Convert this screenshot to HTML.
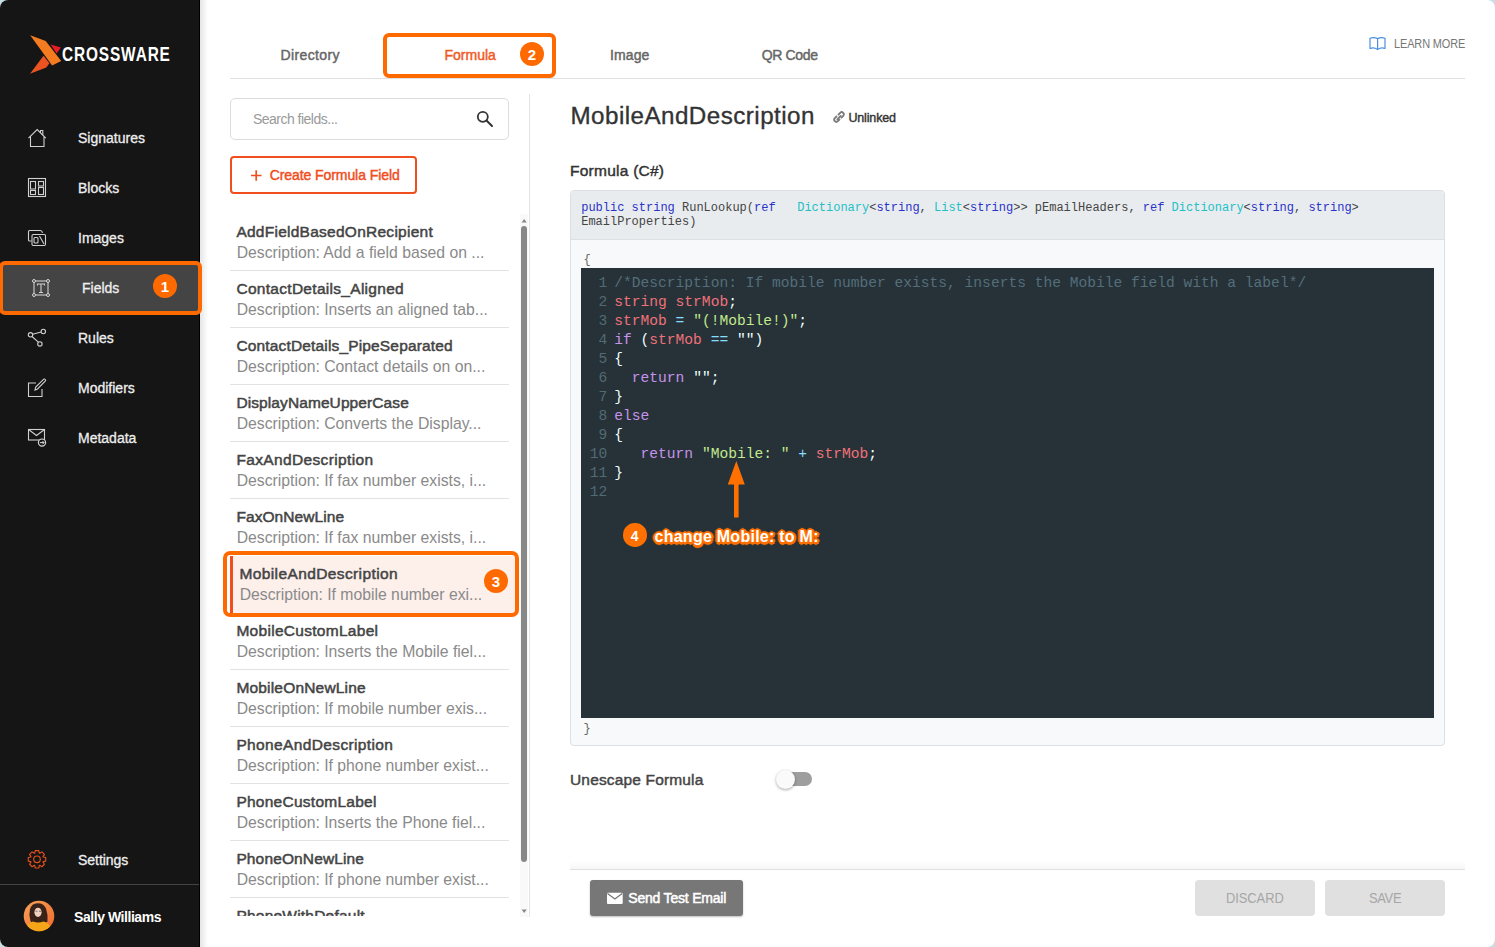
<!DOCTYPE html>
<html><head><meta charset="utf-8">
<style>
*{box-sizing:border-box;margin:0;padding:0}
html,body{width:1495px;height:947px;overflow:hidden;background:#c6e0e4;font-family:"Liberation Sans",sans-serif}
#win{position:absolute;left:0;top:0;width:1495px;height:947px;background:#fff;border-radius:8px;overflow:hidden}
.a{position:absolute}
.t{position:absolute;white-space:pre}
svg{position:absolute;overflow:visible}
</style></head><body><div id="win">
<div class="a" style="left:0;top:0;width:200px;height:947px;background:#151515"></div>
<div class="a" style="left:199px;top:0;width:1px;height:947px;background:#000"></div>
<div class="a" style="left:200px;top:0;width:8px;height:947px;background:linear-gradient(90deg,rgba(0,0,0,0.10),rgba(0,0,0,0))"></div>
<svg style="left:0;top:0" width="200" height="90">
<polygon points="30.2,35.2 45.7,41.1 61.2,60.9 52.1,65.5" fill="#f47b20"/>
<polygon points="50.6,44.6 60.9,47.4 56.6,53.4" fill="#e81c24"/>
<polygon points="30,73.8 43.5,55.8 49.4,63.2 46.3,67.6" fill="#ec5323"/>
</svg>
<div class="t" style="left:61.50px;top:44.22px;font-size:20.3px;line-height:20.3px;color:#fff;font-weight:bold;letter-spacing:1.126px;font-family:'Liberation Sans',sans-serif;transform:scaleX(0.76);transform-origin:0 0;">CROSSWARE</div>
<div class="a" style="left:-1px;top:260.5px;width:202.5px;height:54px;background:#444;border:4px solid #ff6a00;border-radius:6px"></div>
<div class="t" style="left:78.00px;top:131.15px;font-size:14px;line-height:14px;color:#eeeeee;font-weight:normal;letter-spacing:0.000px;font-family:'Liberation Sans',sans-serif;-webkit-text-stroke:0.3px #eeeeee;">Signatures</div>
<div class="t" style="left:78.00px;top:181.15px;font-size:14px;line-height:14px;color:#eeeeee;font-weight:normal;letter-spacing:0.000px;font-family:'Liberation Sans',sans-serif;-webkit-text-stroke:0.3px #eeeeee;">Blocks</div>
<div class="t" style="left:78.00px;top:231.15px;font-size:14px;line-height:14px;color:#eeeeee;font-weight:normal;letter-spacing:0.000px;font-family:'Liberation Sans',sans-serif;-webkit-text-stroke:0.3px #eeeeee;">Images</div>
<div class="t" style="left:82.00px;top:281.15px;font-size:14px;line-height:14px;color:#eeeeee;font-weight:normal;letter-spacing:0.000px;font-family:'Liberation Sans',sans-serif;-webkit-text-stroke:0.3px #eeeeee;">Fields</div>
<div class="t" style="left:78.00px;top:331.15px;font-size:14px;line-height:14px;color:#eeeeee;font-weight:normal;letter-spacing:0.000px;font-family:'Liberation Sans',sans-serif;-webkit-text-stroke:0.3px #eeeeee;">Rules</div>
<div class="t" style="left:78.00px;top:381.15px;font-size:14px;line-height:14px;color:#eeeeee;font-weight:normal;letter-spacing:0.000px;font-family:'Liberation Sans',sans-serif;-webkit-text-stroke:0.3px #eeeeee;">Modifiers</div>
<div class="t" style="left:78.00px;top:431.15px;font-size:14px;line-height:14px;color:#eeeeee;font-weight:normal;letter-spacing:0.000px;font-family:'Liberation Sans',sans-serif;-webkit-text-stroke:0.3px #eeeeee;">Metadata</div>
<svg style="left:0;top:0" width="60" height="460"><g fill="none" stroke="#d0d0d0" stroke-width="1.1"><path d="M28.5,138.2 L37.2,129.5 L45.8,138.2 M30.5,136.3 V146.5 H44 V136.3"/><path d="M40.5,132.8 V130.5 H42.8 V135"/><rect x="28.5" y="178.5" width="17" height="18"/><rect x="30.5" y="181.5" width="5" height="7.5"/><rect x="38.5" y="181.5" width="5" height="4.5"/><rect x="30.5" y="190.5" width="5" height="4"/><rect x="38.5" y="187.5" width="5" height="7"/><path d="M42.5,232.8 Q42,230.5 40.5,230.5 H29.5 Q28.5,230.5 28.5,231.5 V240 Q28.5,241 29.5,241 H31.5"/><rect x="32" y="234.5" width="13.5" height="11" rx="1.2"/><rect x="34" y="237.5" width="4" height="5.5" rx="1"/><path d="M39.5,236 L44,244"/><rect x="34" y="281" width="14" height="14"/><path d="M37.5,285.5 V284 H44.5 V285.5 M41,284 V292.5 M39,292.5 H43"/></g><g fill="#444" stroke="#d8d8d8" stroke-width="1"><circle cx="34" cy="281" r="1.5"/><circle cx="48" cy="281" r="1.5"/><circle cx="34" cy="295" r="1.5"/><circle cx="48" cy="295" r="1.5"/></g><g fill="none" stroke="#d0d0d0" stroke-width="1.1"><circle cx="30.5" cy="334.8" r="2.2"/><circle cx="43.3" cy="331.5" r="2.2"/><circle cx="39.9" cy="343.9" r="2.2"/><path d="M32.6,334.3 L41.2,332 M32,336.5 L38.4,342.2"/><path d="M36,383 H28.5 V396.5 H42 V389"/><path d="M35,390 L35.7,387 L43.5,379.3 Q44.5,378.6 45.3,379.5 Q46,380.4 45.2,381.2 L37.5,389 Z"/><rect x="28.5" y="429.5" width="16" height="10.5"/><path d="M28.5,429.5 L36.5,435.5 L44.5,429.5"/></g><circle cx="42" cy="442.6" r="3.6" fill="#151515" stroke="#d8d8d8" stroke-width="1.2"/><path d="M40,442.6 H44 M42.5,441 L44,442.6 L42.5,444.2" fill="none" stroke="#d8d8d8" stroke-width="1"/></svg>
<div class="a" style="left:153px;top:274px;width:24px;height:24px;border-radius:50%;background:#ff6a00"></div>
<div class="t" style="left:160.80px;top:278.50px;font-size:15px;line-height:15px;color:#fff;font-weight:bold;letter-spacing:0.000px;font-family:'Liberation Sans',sans-serif;">1</div>
<svg style="left:0;top:0" width="60" height="947"><g fill="none" stroke="#e3501c" stroke-width="1.15"><path d="M43.18,856.97 L45.72,857.53 L45.72,861.07 L43.18,861.63 L43.01,862.02 L44.42,864.22 L41.92,866.72 L39.72,865.31 L39.33,865.48 L38.77,868.02 L35.23,868.02 L34.67,865.48 L34.28,865.31 L32.08,866.72 L29.58,864.22 L30.99,862.02 L30.82,861.63 L28.28,861.07 L28.28,857.53 L30.82,856.97 L30.99,856.58 L29.58,854.38 L32.08,851.88 L34.28,853.29 L34.67,853.12 L35.23,850.58 L38.77,850.58 L39.33,853.12 L39.72,853.29 L41.92,851.88 L44.42,854.38 L43.01,856.58 Z" stroke-linejoin="round"/><circle cx="37" cy="859.3" r="3.3"/></g></svg>
<div class="t" style="left:78.00px;top:853.15px;font-size:14px;line-height:14px;color:#eeeeee;font-weight:normal;letter-spacing:-0.041px;font-family:'Liberation Sans',sans-serif;-webkit-text-stroke:0.3px #eeeeee;">Settings</div>
<div class="a" style="left:0;top:884px;width:199px;height:1px;background:#444"></div>
<svg style="left:0;top:0" width="80" height="947">
<defs><linearGradient id="av" x1="0" y1="0" x2="1" y2="1"><stop offset="0" stop-color="#f7a25a"/><stop offset="1" stop-color="#f0692a"/></linearGradient>
<clipPath id="avc"><circle cx="39" cy="916" r="15.3"/></clipPath></defs>
<circle cx="39" cy="916" r="15.3" fill="url(#av)"/>
<g clip-path="url(#avc)">
<path d="M30.5,921 Q28.5,915 30,909 Q31.5,903.5 37.5,903.2 Q43.5,903 46,908.5 Q48,914 47.5,921.5 Q44,925 38,924 Q33,925 30.5,921 Z" fill="#3b2218"/>
<ellipse cx="38" cy="912.3" rx="3.6" ry="4.6" fill="#f0d2c0"/>
<path d="M35.5,911.2 h2 M39,911.2 h2" stroke="#555" stroke-width="0.8"/>
<path d="M25,934 Q26.5,922.5 33,921.5 Q38,923.5 43.5,921.5 Q50.5,922.5 53,934 Z" fill="#f6a418"/>
</g></svg>
<div class="t" style="left:74.00px;top:910.15px;font-size:14px;line-height:14px;color:#ffffff;font-weight:bold;letter-spacing:-0.442px;font-family:'Liberation Sans',sans-serif;">Sally Williams</div>
<div class="t" style="left:280.50px;top:48.15px;font-size:14px;line-height:14px;color:#666;font-weight:normal;letter-spacing:0.374px;font-family:'Liberation Sans',sans-serif;-webkit-text-stroke:0.45px #666;">Directory</div>
<div class="t" style="left:444.50px;top:48.15px;font-size:14px;line-height:14px;color:#f05a22;font-weight:normal;letter-spacing:-0.007px;font-family:'Liberation Sans',sans-serif;-webkit-text-stroke:0.45px #f05a22;">Formula</div>
<div class="t" style="left:610.00px;top:48.15px;font-size:14px;line-height:14px;color:#666;font-weight:normal;letter-spacing:0.123px;font-family:'Liberation Sans',sans-serif;-webkit-text-stroke:0.45px #666;">Image</div>
<div class="t" style="left:761.80px;top:48.15px;font-size:14px;line-height:14px;color:#666;font-weight:normal;letter-spacing:-0.359px;font-family:'Liberation Sans',sans-serif;-webkit-text-stroke:0.45px #666;">QR Code</div>
<div class="a" style="left:230px;top:78px;width:1235px;height:1px;background:#e0e0e0"></div>
<div class="a" style="left:383px;top:33px;width:173px;height:45px;border:4px solid #ff6a00;border-radius:6px"></div>
<div class="a" style="left:520px;top:42px;width:24px;height:24px;border-radius:50%;background:#ff6a00"></div>
<div class="t" style="left:527.80px;top:46.60px;font-size:15px;line-height:15px;color:#fff;font-weight:bold;letter-spacing:0.000px;font-family:'Liberation Sans',sans-serif;">2</div>
<svg style="left:0;top:0" width="1495" height="60"><path d="M1370,38.3 Q1374,37 1377.6,38.6 Q1381.2,37 1385,38.3 V48.5 Q1381.2,47 1377.6,49.5 Q1374,47 1370,48.5 Z M1377.6,38.6 V49.5" fill="none" stroke="#4a8fe0" stroke-width="1.2" stroke-linejoin="round"/></svg>
<div class="t" style="left:1393.60px;top:37.13px;font-size:13.2px;line-height:13.2px;color:#777;font-weight:normal;letter-spacing:-0.140px;font-family:'Liberation Sans',sans-serif;transform:scaleX(0.83);transform-origin:0 0;">LEARN MORE</div>
<div class="a" style="left:230px;top:98px;width:279px;height:42px;border:1px solid #dcdcdc;border-radius:5px"></div>
<div class="t" style="left:252.90px;top:112.05px;font-size:14px;line-height:14px;color:#9a9a9a;font-weight:normal;letter-spacing:-0.506px;font-family:'Liberation Sans',sans-serif;">Search fields...</div>
<svg style="left:0;top:0" width="600" height="200"><circle cx="482.8" cy="116.8" r="5" fill="none" stroke="#333" stroke-width="1.8"/><path d="M486.5,120.5 L492,126" stroke="#333" stroke-width="2" stroke-linecap="round"/></svg>
<div class="a" style="left:230px;top:156px;width:187px;height:38px;border:2px solid #f04e1e;border-radius:4px"></div>
<svg style="left:0;top:0" width="600" height="200"><path d="M251,175.5 H261.5 M256.2,170.3 V180.7" stroke="#f04e1e" stroke-width="1.7"/></svg>
<div class="t" style="left:269.70px;top:168.15px;font-size:14px;line-height:14px;color:#f04e1e;font-weight:normal;letter-spacing:-0.078px;font-family:'Liberation Sans',sans-serif;-webkit-text-stroke:0.45px #f04e1e;">Create Formula Field</div>
<div class="a" style="left:529px;top:94px;width:1px;height:823px;background:#e3e3e3"></div>
<div class="a" style="left:0;top:214px;width:520px;height:702px;overflow:hidden">
<div class="t" style="left:236.40px;top:9.68px;font-size:15.5px;line-height:15.5px;color:#444;font-weight:normal;letter-spacing:0.257px;font-family:'Liberation Sans',sans-serif;-webkit-text-stroke:0.5px #444;">AddFieldBasedOnRecipient</div>
<div class="t" style="left:236.70px;top:30.67px;font-size:15.75px;line-height:15.75px;color:#8a8a8a;font-weight:normal;letter-spacing:0.000px;font-family:'Liberation Sans',sans-serif;">Description: Add a field based on ...</div>
<div class="a" style="left:230px;top:56.4px;width:279px;height:1px;background:#e2e2e2"></div>
<div class="t" style="left:236.40px;top:66.68px;font-size:15.5px;line-height:15.5px;color:#444;font-weight:normal;letter-spacing:0.296px;font-family:'Liberation Sans',sans-serif;-webkit-text-stroke:0.5px #444;">ContactDetails_Aligned</div>
<div class="t" style="left:236.70px;top:87.67px;font-size:15.75px;line-height:15.75px;color:#8a8a8a;font-weight:normal;letter-spacing:0.000px;font-family:'Liberation Sans',sans-serif;">Description: Inserts an aligned tab...</div>
<div class="a" style="left:230px;top:113.4px;width:279px;height:1px;background:#e2e2e2"></div>
<div class="t" style="left:236.40px;top:123.68px;font-size:15.5px;line-height:15.5px;color:#444;font-weight:normal;letter-spacing:0.159px;font-family:'Liberation Sans',sans-serif;-webkit-text-stroke:0.5px #444;">ContactDetails_PipeSeparated</div>
<div class="t" style="left:236.70px;top:144.67px;font-size:15.75px;line-height:15.75px;color:#8a8a8a;font-weight:normal;letter-spacing:0.000px;font-family:'Liberation Sans',sans-serif;">Description: Contact details on on...</div>
<div class="a" style="left:230px;top:170.4px;width:279px;height:1px;background:#e2e2e2"></div>
<div class="t" style="left:236.40px;top:180.68px;font-size:15.5px;line-height:15.5px;color:#444;font-weight:normal;letter-spacing:0.095px;font-family:'Liberation Sans',sans-serif;-webkit-text-stroke:0.5px #444;">DisplayNameUpperCase</div>
<div class="t" style="left:236.70px;top:201.67px;font-size:15.75px;line-height:15.75px;color:#8a8a8a;font-weight:normal;letter-spacing:0.000px;font-family:'Liberation Sans',sans-serif;">Description: Converts the Display...</div>
<div class="a" style="left:230px;top:227.4px;width:279px;height:1px;background:#e2e2e2"></div>
<div class="t" style="left:236.40px;top:237.68px;font-size:15.5px;line-height:15.5px;color:#444;font-weight:normal;letter-spacing:0.359px;font-family:'Liberation Sans',sans-serif;-webkit-text-stroke:0.5px #444;">FaxAndDescription</div>
<div class="t" style="left:236.70px;top:258.67px;font-size:15.75px;line-height:15.75px;color:#8a8a8a;font-weight:normal;letter-spacing:0.000px;font-family:'Liberation Sans',sans-serif;">Description: If fax number exists, i...</div>
<div class="a" style="left:230px;top:284.4px;width:279px;height:1px;background:#e2e2e2"></div>
<div class="t" style="left:236.40px;top:294.68px;font-size:15.5px;line-height:15.5px;color:#444;font-weight:normal;letter-spacing:0.080px;font-family:'Liberation Sans',sans-serif;-webkit-text-stroke:0.5px #444;">FaxOnNewLine</div>
<div class="t" style="left:236.70px;top:315.67px;font-size:15.75px;line-height:15.75px;color:#8a8a8a;font-weight:normal;letter-spacing:0.000px;font-family:'Liberation Sans',sans-serif;">Description: If fax number exists, i...</div>
<div class="a" style="left:230px;top:342.4px;width:286px;height:57px;background:#fdefea"></div>
<div class="a" style="left:230px;top:342.4px;width:3px;height:57px;background:#f04e1e"></div>
<div class="t" style="left:239.40px;top:351.68px;font-size:15.5px;line-height:15.5px;color:#444;font-weight:normal;letter-spacing:0.392px;font-family:'Liberation Sans',sans-serif;-webkit-text-stroke:0.5px #444;">MobileAndDescription</div>
<div class="t" style="left:239.70px;top:372.67px;font-size:15.75px;line-height:15.75px;color:#8a8a8a;font-weight:normal;letter-spacing:0.000px;font-family:'Liberation Sans',sans-serif;">Description: If mobile number exi...</div>
<div class="t" style="left:236.40px;top:408.68px;font-size:15.5px;line-height:15.5px;color:#444;font-weight:normal;letter-spacing:0.291px;font-family:'Liberation Sans',sans-serif;-webkit-text-stroke:0.5px #444;">MobileCustomLabel</div>
<div class="t" style="left:236.70px;top:429.67px;font-size:15.75px;line-height:15.75px;color:#8a8a8a;font-weight:normal;letter-spacing:0.000px;font-family:'Liberation Sans',sans-serif;">Description: Inserts the Mobile fiel...</div>
<div class="a" style="left:230px;top:455.4px;width:279px;height:1px;background:#e2e2e2"></div>
<div class="t" style="left:236.40px;top:465.68px;font-size:15.5px;line-height:15.5px;color:#444;font-weight:normal;letter-spacing:0.184px;font-family:'Liberation Sans',sans-serif;-webkit-text-stroke:0.5px #444;">MobileOnNewLine</div>
<div class="t" style="left:236.70px;top:486.67px;font-size:15.75px;line-height:15.75px;color:#8a8a8a;font-weight:normal;letter-spacing:0.000px;font-family:'Liberation Sans',sans-serif;">Description: If mobile number exis...</div>
<div class="a" style="left:230px;top:512.4px;width:279px;height:1px;background:#e2e2e2"></div>
<div class="t" style="left:236.40px;top:522.68px;font-size:15.5px;line-height:15.5px;color:#444;font-weight:normal;letter-spacing:0.368px;font-family:'Liberation Sans',sans-serif;-webkit-text-stroke:0.5px #444;">PhoneAndDescription</div>
<div class="t" style="left:236.70px;top:543.67px;font-size:15.75px;line-height:15.75px;color:#8a8a8a;font-weight:normal;letter-spacing:0.000px;font-family:'Liberation Sans',sans-serif;">Description: If phone number exist...</div>
<div class="a" style="left:230px;top:569.4px;width:279px;height:1px;background:#e2e2e2"></div>
<div class="t" style="left:236.40px;top:579.68px;font-size:15.5px;line-height:15.5px;color:#444;font-weight:normal;letter-spacing:0.257px;font-family:'Liberation Sans',sans-serif;-webkit-text-stroke:0.5px #444;">PhoneCustomLabel</div>
<div class="t" style="left:236.70px;top:600.67px;font-size:15.75px;line-height:15.75px;color:#8a8a8a;font-weight:normal;letter-spacing:0.000px;font-family:'Liberation Sans',sans-serif;">Description: Inserts the Phone fiel...</div>
<div class="a" style="left:230px;top:626.4px;width:279px;height:1px;background:#e2e2e2"></div>
<div class="t" style="left:236.40px;top:636.68px;font-size:15.5px;line-height:15.5px;color:#444;font-weight:normal;letter-spacing:0.136px;font-family:'Liberation Sans',sans-serif;-webkit-text-stroke:0.5px #444;">PhoneOnNewLine</div>
<div class="t" style="left:236.70px;top:657.67px;font-size:15.75px;line-height:15.75px;color:#8a8a8a;font-weight:normal;letter-spacing:0.000px;font-family:'Liberation Sans',sans-serif;">Description: If phone number exist...</div>
<div class="a" style="left:230px;top:683.4px;width:279px;height:1px;background:#e2e2e2"></div>
<div class="t" style="left:236.40px;top:693.68px;font-size:15.5px;line-height:15.5px;color:#444;font-weight:normal;letter-spacing:0.221px;font-family:'Liberation Sans',sans-serif;-webkit-text-stroke:0.5px #444;">PhoneWithDefault</div>
<div class="t" style="left:236.70px;top:714.67px;font-size:15.75px;line-height:15.75px;color:#8a8a8a;font-weight:normal;letter-spacing:0.000px;font-family:'Liberation Sans',sans-serif;">Description: ...</div>
<div class="a" style="left:230px;top:740.4px;width:279px;height:1px;background:#e2e2e2"></div>
</div>
<div class="a" style="left:519.5px;top:214px;width:8.5px;height:702.5px;background:#f9f9f9"></div>
<div class="a" style="left:521.3px;top:226px;width:5.7px;height:635.5px;background:#888;border-radius:3px"></div>
<svg style="left:0;top:0" width="600" height="947"><path d="M521.6,222.5 L524.2,219 L526.8,222.5 Z M521.6,909.5 L524.2,913 L526.8,909.5 Z" fill="#888"/></svg>
<div class="a" style="left:223px;top:551px;width:296px;height:65.5px;border:4px solid #ff6a00;border-radius:7px"></div>
<div class="a" style="left:484px;top:569px;width:24px;height:24px;border-radius:50%;background:#ff6a00"></div>
<div class="t" style="left:491.80px;top:573.60px;font-size:15px;line-height:15px;color:#fff;font-weight:bold;letter-spacing:0.000px;font-family:'Liberation Sans',sans-serif;">3</div>
<div class="t" style="left:570.50px;top:104.31px;font-size:24.2px;line-height:24.2px;color:#333;font-weight:normal;letter-spacing:0.454px;font-family:'Liberation Sans',sans-serif;-webkit-text-stroke:0.35px #333;">MobileAndDescription</div>
<svg style="left:0;top:0" width="1495" height="200"><g fill="none" stroke="#7a7a7a" stroke-width="1.8" stroke-linecap="round"><path d="M836.5,116.5 L834.8,118.2 Q833.3,119.7 834.8,121.2 Q836.3,122.7 837.8,121.2 L839.5,119.5"/><path d="M838.5,114.5 L840.2,112.8 Q841.7,111.3 843.2,112.8 Q844.7,114.3 843.2,115.8 L841.5,117.5"/><path d="M837.3,119.3 L840.7,115.9"/></g></svg>
<div class="t" style="left:848.40px;top:111.82px;font-size:12.5px;line-height:12.5px;color:#333;font-weight:normal;letter-spacing:-0.148px;font-family:'Liberation Sans',sans-serif;-webkit-text-stroke:0.4px #333;">Unlinked</div>
<div class="t" style="left:570.00px;top:162.88px;font-size:15.5px;line-height:15.5px;color:#333;font-weight:normal;letter-spacing:0.247px;font-family:'Liberation Sans',sans-serif;-webkit-text-stroke:0.45px #333;">Formula (C#)</div>
<div class="a" style="left:570px;top:190px;width:875px;height:556px;border:1px solid #dcdfe3;border-radius:4px;background:#f8f9fa;overflow:hidden"><div class="a" style="left:0;top:0;width:873px;height:49px;background:#e9ecef;border-bottom:1px solid #dcdfe3"></div></div>
<div class="t" style="left:581.20px;top:201.50px;font-size:12px;line-height:12px;color:#2a33c8;font-weight:normal;letter-spacing:0.000px;font-family:'Liberation Mono',monospace;">public</div>
<div class="t" style="left:624.40px;top:201.50px;font-size:12px;line-height:12px;color:#444;font-weight:normal;letter-spacing:0.000px;font-family:'Liberation Mono',monospace;"> </div>
<div class="t" style="left:631.60px;top:201.50px;font-size:12px;line-height:12px;color:#2a33c8;font-weight:normal;letter-spacing:0.000px;font-family:'Liberation Mono',monospace;">string</div>
<div class="t" style="left:674.80px;top:201.50px;font-size:12px;line-height:12px;color:#444;font-weight:normal;letter-spacing:0.000px;font-family:'Liberation Mono',monospace;"> RunLookup(</div>
<div class="t" style="left:754.00px;top:201.50px;font-size:12px;line-height:12px;color:#2a33c8;font-weight:normal;letter-spacing:0.000px;font-family:'Liberation Mono',monospace;">ref</div>
<div class="t" style="left:775.60px;top:201.50px;font-size:12px;line-height:12px;color:#444;font-weight:normal;letter-spacing:0.000px;font-family:'Liberation Mono',monospace;">   </div>
<div class="t" style="left:797.20px;top:201.50px;font-size:12px;line-height:12px;color:#22c0c6;font-weight:normal;letter-spacing:0.000px;font-family:'Liberation Mono',monospace;">Dictionary</div>
<div class="t" style="left:869.20px;top:201.50px;font-size:12px;line-height:12px;color:#444;font-weight:normal;letter-spacing:0.000px;font-family:'Liberation Mono',monospace;">&lt;</div>
<div class="t" style="left:876.40px;top:201.50px;font-size:12px;line-height:12px;color:#2a33c8;font-weight:normal;letter-spacing:0.000px;font-family:'Liberation Mono',monospace;">string</div>
<div class="t" style="left:919.60px;top:201.50px;font-size:12px;line-height:12px;color:#444;font-weight:normal;letter-spacing:0.000px;font-family:'Liberation Mono',monospace;">, </div>
<div class="t" style="left:934.00px;top:201.50px;font-size:12px;line-height:12px;color:#22c0c6;font-weight:normal;letter-spacing:0.000px;font-family:'Liberation Mono',monospace;">List</div>
<div class="t" style="left:962.80px;top:201.50px;font-size:12px;line-height:12px;color:#444;font-weight:normal;letter-spacing:0.000px;font-family:'Liberation Mono',monospace;">&lt;</div>
<div class="t" style="left:970.00px;top:201.50px;font-size:12px;line-height:12px;color:#2a33c8;font-weight:normal;letter-spacing:0.000px;font-family:'Liberation Mono',monospace;">string</div>
<div class="t" style="left:1013.20px;top:201.50px;font-size:12px;line-height:12px;color:#444;font-weight:normal;letter-spacing:0.000px;font-family:'Liberation Mono',monospace;">&gt;&gt; pEmailHeaders, </div>
<div class="t" style="left:1142.80px;top:201.50px;font-size:12px;line-height:12px;color:#2a33c8;font-weight:normal;letter-spacing:0.000px;font-family:'Liberation Mono',monospace;">ref</div>
<div class="t" style="left:1164.40px;top:201.50px;font-size:12px;line-height:12px;color:#444;font-weight:normal;letter-spacing:0.000px;font-family:'Liberation Mono',monospace;"> </div>
<div class="t" style="left:1171.60px;top:201.50px;font-size:12px;line-height:12px;color:#22c0c6;font-weight:normal;letter-spacing:0.000px;font-family:'Liberation Mono',monospace;">Dictionary</div>
<div class="t" style="left:1243.60px;top:201.50px;font-size:12px;line-height:12px;color:#444;font-weight:normal;letter-spacing:0.000px;font-family:'Liberation Mono',monospace;">&lt;</div>
<div class="t" style="left:1250.80px;top:201.50px;font-size:12px;line-height:12px;color:#2a33c8;font-weight:normal;letter-spacing:0.000px;font-family:'Liberation Mono',monospace;">string</div>
<div class="t" style="left:1294.00px;top:201.50px;font-size:12px;line-height:12px;color:#444;font-weight:normal;letter-spacing:0.000px;font-family:'Liberation Mono',monospace;">, </div>
<div class="t" style="left:1308.40px;top:201.50px;font-size:12px;line-height:12px;color:#2a33c8;font-weight:normal;letter-spacing:0.000px;font-family:'Liberation Mono',monospace;">string</div>
<div class="t" style="left:1351.60px;top:201.50px;font-size:12px;line-height:12px;color:#444;font-weight:normal;letter-spacing:0.000px;font-family:'Liberation Mono',monospace;">&gt;</div>
<div class="t" style="left:581.20px;top:215.60px;font-size:12px;line-height:12px;color:#444;font-weight:normal;letter-spacing:0.000px;font-family:'Liberation Mono',monospace;">EmailProperties)</div>
<div class="t" style="left:583.50px;top:253.80px;font-size:12px;line-height:12px;color:#666;font-weight:normal;letter-spacing:0.000px;font-family:'Liberation Mono',monospace;">{</div>
<div class="t" style="left:583.50px;top:722.80px;font-size:12px;line-height:12px;color:#666;font-weight:normal;letter-spacing:0.000px;font-family:'Liberation Mono',monospace;">}</div>
<div class="a" style="left:581px;top:268px;width:853px;height:450px;background:#263238"></div>
<div class="t" style="left:598.54px;top:275.71px;font-size:14.6px;line-height:14.6px;color:#526a74;font-weight:normal;letter-spacing:0.000px;font-family:'Liberation Mono',monospace;">1</div>
<div class="t" style="left:614.30px;top:275.71px;font-size:14.6px;line-height:14.6px;color:#546e7a;font-weight:normal;letter-spacing:0.000px;font-family:'Liberation Mono',monospace;">/*Description: If mobile number exists, inserts the Mobile field with a label*/</div>
<div class="t" style="left:598.54px;top:294.71px;font-size:14.6px;line-height:14.6px;color:#526a74;font-weight:normal;letter-spacing:0.000px;font-family:'Liberation Mono',monospace;">2</div>
<div class="t" style="left:614.30px;top:294.71px;font-size:14.6px;line-height:14.6px;color:#f07178;font-weight:normal;letter-spacing:0.000px;font-family:'Liberation Mono',monospace;">string strMob</div>
<div class="t" style="left:728.18px;top:294.71px;font-size:14.6px;line-height:14.6px;color:#eeffff;font-weight:normal;letter-spacing:0.000px;font-family:'Liberation Mono',monospace;">;</div>
<div class="t" style="left:598.54px;top:313.71px;font-size:14.6px;line-height:14.6px;color:#526a74;font-weight:normal;letter-spacing:0.000px;font-family:'Liberation Mono',monospace;">3</div>
<div class="t" style="left:614.30px;top:313.71px;font-size:14.6px;line-height:14.6px;color:#f07178;font-weight:normal;letter-spacing:0.000px;font-family:'Liberation Mono',monospace;">strMob</div>
<div class="t" style="left:666.86px;top:313.71px;font-size:14.6px;line-height:14.6px;color:#eeffff;font-weight:normal;letter-spacing:0.000px;font-family:'Liberation Mono',monospace;"> </div>
<div class="t" style="left:675.62px;top:313.71px;font-size:14.6px;line-height:14.6px;color:#89ddff;font-weight:normal;letter-spacing:0.000px;font-family:'Liberation Mono',monospace;">=</div>
<div class="t" style="left:684.38px;top:313.71px;font-size:14.6px;line-height:14.6px;color:#eeffff;font-weight:normal;letter-spacing:0.000px;font-family:'Liberation Mono',monospace;"> </div>
<div class="t" style="left:693.14px;top:313.71px;font-size:14.6px;line-height:14.6px;color:#c3e88d;font-weight:normal;letter-spacing:0.000px;font-family:'Liberation Mono',monospace;">&quot;(!Mobile!)&quot;</div>
<div class="t" style="left:798.26px;top:313.71px;font-size:14.6px;line-height:14.6px;color:#eeffff;font-weight:normal;letter-spacing:0.000px;font-family:'Liberation Mono',monospace;">;</div>
<div class="t" style="left:598.54px;top:332.71px;font-size:14.6px;line-height:14.6px;color:#526a74;font-weight:normal;letter-spacing:0.000px;font-family:'Liberation Mono',monospace;">4</div>
<div class="t" style="left:614.30px;top:332.71px;font-size:14.6px;line-height:14.6px;color:#c792ea;font-weight:normal;letter-spacing:0.000px;font-family:'Liberation Mono',monospace;">if</div>
<div class="t" style="left:631.82px;top:332.71px;font-size:14.6px;line-height:14.6px;color:#eeffff;font-weight:normal;letter-spacing:0.000px;font-family:'Liberation Mono',monospace;"> (</div>
<div class="t" style="left:649.34px;top:332.71px;font-size:14.6px;line-height:14.6px;color:#f07178;font-weight:normal;letter-spacing:0.000px;font-family:'Liberation Mono',monospace;">strMob</div>
<div class="t" style="left:701.90px;top:332.71px;font-size:14.6px;line-height:14.6px;color:#eeffff;font-weight:normal;letter-spacing:0.000px;font-family:'Liberation Mono',monospace;"> </div>
<div class="t" style="left:710.66px;top:332.71px;font-size:14.6px;line-height:14.6px;color:#89ddff;font-weight:normal;letter-spacing:0.000px;font-family:'Liberation Mono',monospace;">==</div>
<div class="t" style="left:728.18px;top:332.71px;font-size:14.6px;line-height:14.6px;color:#eeffff;font-weight:normal;letter-spacing:0.000px;font-family:'Liberation Mono',monospace;"> </div>
<div class="t" style="left:736.94px;top:332.71px;font-size:14.6px;line-height:14.6px;color:#eeffff;font-weight:normal;letter-spacing:0.000px;font-family:'Liberation Mono',monospace;">&quot;&quot;</div>
<div class="t" style="left:754.46px;top:332.71px;font-size:14.6px;line-height:14.6px;color:#eeffff;font-weight:normal;letter-spacing:0.000px;font-family:'Liberation Mono',monospace;">)</div>
<div class="t" style="left:598.54px;top:351.71px;font-size:14.6px;line-height:14.6px;color:#526a74;font-weight:normal;letter-spacing:0.000px;font-family:'Liberation Mono',monospace;">5</div>
<div class="t" style="left:614.30px;top:351.71px;font-size:14.6px;line-height:14.6px;color:#eeffff;font-weight:normal;letter-spacing:0.000px;font-family:'Liberation Mono',monospace;">{</div>
<div class="t" style="left:598.54px;top:370.71px;font-size:14.6px;line-height:14.6px;color:#526a74;font-weight:normal;letter-spacing:0.000px;font-family:'Liberation Mono',monospace;">6</div>
<div class="t" style="left:614.30px;top:370.71px;font-size:14.6px;line-height:14.6px;color:#eeffff;font-weight:normal;letter-spacing:0.000px;font-family:'Liberation Mono',monospace;">  </div>
<div class="t" style="left:631.82px;top:370.71px;font-size:14.6px;line-height:14.6px;color:#c792ea;font-weight:normal;letter-spacing:0.000px;font-family:'Liberation Mono',monospace;">return</div>
<div class="t" style="left:684.38px;top:370.71px;font-size:14.6px;line-height:14.6px;color:#eeffff;font-weight:normal;letter-spacing:0.000px;font-family:'Liberation Mono',monospace;"> </div>
<div class="t" style="left:693.14px;top:370.71px;font-size:14.6px;line-height:14.6px;color:#eeffff;font-weight:normal;letter-spacing:0.000px;font-family:'Liberation Mono',monospace;">&quot;&quot;</div>
<div class="t" style="left:710.66px;top:370.71px;font-size:14.6px;line-height:14.6px;color:#eeffff;font-weight:normal;letter-spacing:0.000px;font-family:'Liberation Mono',monospace;">;</div>
<div class="t" style="left:598.54px;top:389.71px;font-size:14.6px;line-height:14.6px;color:#526a74;font-weight:normal;letter-spacing:0.000px;font-family:'Liberation Mono',monospace;">7</div>
<div class="t" style="left:614.30px;top:389.71px;font-size:14.6px;line-height:14.6px;color:#eeffff;font-weight:normal;letter-spacing:0.000px;font-family:'Liberation Mono',monospace;">}</div>
<div class="t" style="left:598.54px;top:408.71px;font-size:14.6px;line-height:14.6px;color:#526a74;font-weight:normal;letter-spacing:0.000px;font-family:'Liberation Mono',monospace;">8</div>
<div class="t" style="left:614.30px;top:408.71px;font-size:14.6px;line-height:14.6px;color:#c792ea;font-weight:normal;letter-spacing:0.000px;font-family:'Liberation Mono',monospace;">else</div>
<div class="t" style="left:598.54px;top:427.71px;font-size:14.6px;line-height:14.6px;color:#526a74;font-weight:normal;letter-spacing:0.000px;font-family:'Liberation Mono',monospace;">9</div>
<div class="t" style="left:614.30px;top:427.71px;font-size:14.6px;line-height:14.6px;color:#eeffff;font-weight:normal;letter-spacing:0.000px;font-family:'Liberation Mono',monospace;">{</div>
<div class="t" style="left:589.78px;top:446.71px;font-size:14.6px;line-height:14.6px;color:#526a74;font-weight:normal;letter-spacing:0.000px;font-family:'Liberation Mono',monospace;">10</div>
<div class="t" style="left:614.30px;top:446.71px;font-size:14.6px;line-height:14.6px;color:#eeffff;font-weight:normal;letter-spacing:0.000px;font-family:'Liberation Mono',monospace;">   </div>
<div class="t" style="left:640.58px;top:446.71px;font-size:14.6px;line-height:14.6px;color:#c792ea;font-weight:normal;letter-spacing:0.000px;font-family:'Liberation Mono',monospace;">return</div>
<div class="t" style="left:693.14px;top:446.71px;font-size:14.6px;line-height:14.6px;color:#eeffff;font-weight:normal;letter-spacing:0.000px;font-family:'Liberation Mono',monospace;"> </div>
<div class="t" style="left:701.90px;top:446.71px;font-size:14.6px;line-height:14.6px;color:#c3e88d;font-weight:normal;letter-spacing:0.000px;font-family:'Liberation Mono',monospace;">&quot;Mobile: &quot;</div>
<div class="t" style="left:789.50px;top:446.71px;font-size:14.6px;line-height:14.6px;color:#eeffff;font-weight:normal;letter-spacing:0.000px;font-family:'Liberation Mono',monospace;"> </div>
<div class="t" style="left:798.26px;top:446.71px;font-size:14.6px;line-height:14.6px;color:#89ddff;font-weight:normal;letter-spacing:0.000px;font-family:'Liberation Mono',monospace;">+</div>
<div class="t" style="left:807.02px;top:446.71px;font-size:14.6px;line-height:14.6px;color:#eeffff;font-weight:normal;letter-spacing:0.000px;font-family:'Liberation Mono',monospace;"> </div>
<div class="t" style="left:815.78px;top:446.71px;font-size:14.6px;line-height:14.6px;color:#f07178;font-weight:normal;letter-spacing:0.000px;font-family:'Liberation Mono',monospace;">strMob</div>
<div class="t" style="left:868.34px;top:446.71px;font-size:14.6px;line-height:14.6px;color:#eeffff;font-weight:normal;letter-spacing:0.000px;font-family:'Liberation Mono',monospace;">;</div>
<div class="t" style="left:589.78px;top:465.71px;font-size:14.6px;line-height:14.6px;color:#526a74;font-weight:normal;letter-spacing:0.000px;font-family:'Liberation Mono',monospace;">11</div>
<div class="t" style="left:614.30px;top:465.71px;font-size:14.6px;line-height:14.6px;color:#eeffff;font-weight:normal;letter-spacing:0.000px;font-family:'Liberation Mono',monospace;">}</div>
<div class="t" style="left:589.78px;top:484.71px;font-size:14.6px;line-height:14.6px;color:#526a74;font-weight:normal;letter-spacing:0.000px;font-family:'Liberation Mono',monospace;">12</div>
<svg style="left:0;top:0" width="1495" height="947"><path d="M736.3,461 L744.8,484.5 L738.6,484.5 L738.6,517.5 L734,517.5 L734,484.5 L727.8,484.5 Z" fill="#ff7000"/></svg>
<div class="a" style="left:623.2px;top:523.2px;width:23.6px;height:23.6px;border-radius:50%;background:#ff7000"></div>
<div class="t" style="left:630.80px;top:528.65px;font-size:14px;line-height:14px;color:#fff;font-weight:bold;letter-spacing:0.000px;font-family:'Liberation Sans',sans-serif;">4</div>
<div class="t" style="left:654.50px;top:529.46px;font-size:16px;line-height:16px;color:#fff;font-weight:bold;letter-spacing:0.259px;font-family:'Liberation Sans',sans-serif;-webkit-text-stroke:0;text-shadow:0 0 2px #ff7000,1.5px 0 0 #ff7000,-1.5px 0 0 #ff7000,0 1.5px 0 #ff7000,0 -1.5px 0 #ff7000,1.5px 1.5px 0 #ff7000,-1.5px -1.5px 0 #ff7000,1.5px -1.5px 0 #ff7000,-1.5px 1.5px 0 #ff7000,2.5px 0 1px #ff7000,-2.5px 0 1px #ff7000,0 2.5px 1px #ff7000,0 -2.5px 1px #ff7000">change Mobile: to M:</div>
<div class="t" style="left:570.00px;top:771.88px;font-size:15.5px;line-height:15.5px;color:#444;font-weight:normal;letter-spacing:0.157px;font-family:'Liberation Sans',sans-serif;-webkit-text-stroke:0.45px #444;">Unescape Formula</div>
<div class="a" style="left:785px;top:772.3px;width:27px;height:13.5px;border-radius:7px;background:#9e9e9e"></div>
<div class="a" style="left:776.3px;top:769.7px;width:19px;height:19px;border-radius:50%;background:#fafafa;box-shadow:0 1px 3px rgba(0,0,0,0.35)"></div>
<div class="a" style="left:570px;top:861px;width:895px;height:8px;background:linear-gradient(180deg,rgba(0,0,0,0),rgba(0,0,0,0.035))"></div>
<div class="a" style="left:570px;top:869px;width:895px;height:1px;background:#e0e0e0"></div>
<div class="a" style="left:590px;top:880px;width:153px;height:35.5px;border-radius:3px;background:#777;box-shadow:0 1px 2px rgba(0,0,0,0.25)"></div>
<svg style="left:0;top:0" width="1495" height="947"><rect x="607" y="892.7" width="15.7" height="11.2" rx="1" fill="#fff"/><path d="M607.5,893.5 L614.85,899 L622.2,893.5" fill="none" stroke="#777" stroke-width="1.3"/></svg>
<div class="t" style="left:628.30px;top:891.15px;font-size:14px;line-height:14px;color:#fff;font-weight:normal;letter-spacing:-0.207px;font-family:'Liberation Sans',sans-serif;-webkit-text-stroke:0.5px #fff;">Send Test Email</div>
<div class="a" style="left:1195px;top:880px;width:120px;height:36px;border-radius:4px;background:#e0e0e0"></div>
<div class="a" style="left:1325px;top:880px;width:120px;height:36px;border-radius:4px;background:#e0e0e0"></div>
<div class="t" style="left:1226.20px;top:890.40px;font-size:15px;line-height:15px;color:#a6a6a6;font-weight:normal;letter-spacing:-0.069px;font-family:'Liberation Sans',sans-serif;transform:scaleX(0.86);transform-origin:0 0;">DISCARD</div>
<div class="t" style="left:1369.00px;top:890.40px;font-size:15px;line-height:15px;color:#a6a6a6;font-weight:normal;letter-spacing:-0.373px;font-family:'Liberation Sans',sans-serif;transform:scaleX(0.86);transform-origin:0 0;">SAVE</div>
</div></body></html>
